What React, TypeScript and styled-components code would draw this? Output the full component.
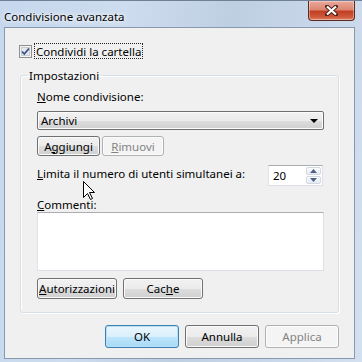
import styled, { createGlobalStyle } from "styled-components";

const GlobalStyle = createGlobalStyle`
  html, body {
    margin: 0;
    padding: 0;
  }
  body {
    width: 362px;
    height: 362px;
    overflow: hidden;
    font-family: "Segoe UI", "Noto Sans", sans-serif;
    font-size: 11.5px;
    line-height: 13px;
    color: #000;
  }
  * {
    box-sizing: border-box;
  }
`;

const Window = styled.div`
  position: relative;
  width: 362px;
  height: 362px;
  display: flex;
  flex-direction: column;
  padding: 0 7px 3px 4px;
  border-top: 1px solid #6f8097;
  background: linear-gradient(
    100deg,
    #c6d8ee 0%,
    #cddcee 30%,
    #bfcfe2 55%,
    #c9d8ea 80%,
    #d3e0ef 100%
  );
`;

const TitleBar = styled.div`
  height: 26px;
  display: flex;
  justify-content: space-between;
  align-items: flex-start;
`;

const Title = styled.div`
  margin-top: 9px;
  font-size: 11.5px;
  color: #000;
  text-shadow: 0 0 6px #fff, 0 0 3px #fff;
`;

const CloseButton = styled.div`
  width: 47px;
  height: 20px;
  display: flex;
  align-items: center;
  justify-content: center;
  border: 1px solid #5b2a22;
  border-top: none;
  border-radius: 0 0 4px 4px;
  background: linear-gradient(
    180deg,
    #e9a99b 0%,
    #dc8672 45%,
    #c23f24 55%,
    #cf5a3b 85%,
    #e0876b 100%
  );
  box-shadow: inset 0 0 0 1px rgba(255, 255, 255, 0.35);
`;

const Client = styled.div`
  flex: 1;
  display: flex;
  flex-direction: column;
  background: #f0f0f0;
  border: 1px solid #8799b0;
`;

const CheckRow = styled.div`
  display: flex;
  align-items: center;
  gap: 3px;
  margin: 16px 0 0 14px;
`;

const FocusLabel = styled.span`
  outline: 1px dotted #222;
  padding: 1px 1px 0;
`;

const Group = styled.fieldset`
  margin: 11px 15px 0;
  padding: 0;
  min-width: 0;
  border: 1px solid #d5dfe5;
  border-radius: 3px;
  box-shadow: inset 1px 1px 0 #fff, 1px 1px 0 #fff;
`;

const Legend = styled.legend`
  margin-left: 6px;
  padding: 0 2px;
  line-height: 13px;
`;

const GroupBody = styled.div`
  display: flex;
  flex-direction: column;
  padding: 8px 14px 13px 16px;
`;

const Label = styled.div<{ $top?: number }>`
  margin-top: ${(p) => p.$top ?? 0}px;
`;

const Combo = styled.div`
  margin-top: 8px;
  height: 19px;
  display: flex;
  align-items: center;
  justify-content: space-between;
  padding: 0 5px 0 3px;
  border: 1px solid #707070;
  border-radius: 2px;
  background: linear-gradient(180deg, #f2f2f2 0%, #ebebeb 50%, #dddddd 51%, #cfcfcf 100%);
  box-shadow: inset 0 0 0 1px #fcfcfc;
`;

const Row = styled.div<{ $top: number; $gap?: number }>`
  display: flex;
  gap: ${(p) => p.$gap ?? 6}px;
  margin-top: ${(p) => p.$top}px;
`;

const SpreadRow = styled.div`
  display: flex;
  justify-content: space-between;
  align-items: flex-start;
  margin-top: 9px;
  padding-right: 1px;
`;

const Button = styled.button<{ $w: number; $h?: number; $primary?: boolean }>`
  width: ${(p) => p.$w}px;
  height: ${(p) => p.$h ?? 20}px;
  padding: 0;
  font: inherit;
  line-height: 13px;
  color: #000;
  border: 1px solid ${(p) => (p.$primary ? "#3c7fb1" : "#707070")};
  border-radius: 3px;
  background: ${(p) =>
    p.$primary
      ? "linear-gradient(180deg, #eaf6fd 0%, #d9f0fc 50%, #bee6fd 51%, #a7d9f5 100%)"
      : "linear-gradient(180deg, #f2f2f2 0%, #ebebeb 50%, #dddddd 51%, #cfcfcf 100%)"};
  box-shadow: inset 0 0 0 1px ${(p) => (p.$primary ? "#b6e1f9" : "#fbfbfb")};

  &:disabled {
    color: #838383;
    border-color: #adb2b5;
    background: #f4f4f4;
    box-shadow: inset 0 0 0 1px #fcfcfc;
  }
`;

const SpinBox = styled.div`
  width: 55px;
  height: 21px;
  display: flex;
  background: #fff;
  border: 1px solid #dbdfe6;
  border-top-color: #abadb3;
  border-left-color: #e2e3ea;
`;

const SpinValue = styled.div`
  flex: 1;
  padding: 3px 0 0 4px;
`;

const SpinButtons = styled.div`
  width: 16px;
  display: flex;
  flex-direction: column;
  gap: 1px;
  padding: 1px 1px 1px 0;
`;

const SpinArrow = styled.div`
  flex: 1;
  display: flex;
  align-items: center;
  justify-content: center;
  border: 1px solid #d2d9e2;
  border-radius: 2px;
  background: linear-gradient(180deg, #fbfcfd, #e6ebf1);
`;

const Comments = styled.div`
  margin-top: 1px;
  height: 59px;
  background: #fff;
  border: 1px solid #dbdfe6;
  border-top-color: #abadb3;
  border-left-color: #e2e3ea;
`;

const Footer = styled.div`
  display: flex;
  justify-content: flex-end;
  gap: 6px;
  margin: 12px 15px 0 0;
`;

const Pointer = styled.svg`
  position: absolute;
  left: 83px;
  top: 180px;
`;

function CheckBox() {
  return (
    <svg width="13" height="13" viewBox="0 0 13 13">
      <rect x="0.5" y="0.5" width="12" height="12" fill="#f4f4f4" stroke="#8e8f8f" />
      <rect x="2.5" y="2.5" width="8" height="8" fill="#e4e7ec" stroke="#c6cbd3" />
      <path d="M3 6.5 L5.3 9 L10 3.5" fill="none" stroke="#3a5387" strokeWidth="1.8" />
    </svg>
  );
}

function Arrow({ up }: { up?: boolean }) {
  return (
    <svg width="7" height="4" viewBox="0 0 7 4">
      <path d={up ? "M0 4 L3.5 0 L7 4 Z" : "M0 0 L3.5 4 L7 0 Z"} fill="#4d6185" />
    </svg>
  );
}

export default function App() {
  return (
    <>
      <GlobalStyle />
      <Window>
        <TitleBar>
          <Title>Condivisione avanzata</Title>
          <CloseButton>
            <svg width="13" height="11" viewBox="0 0 13 11">
              <path
                d="M2 1.5 L11 9.5 M11 1.5 L2 9.5"
                stroke="#4a2019"
                strokeWidth="4"
                strokeLinecap="round"
              />
              <path d="M2 1.5 L11 9.5 M11 1.5 L2 9.5" stroke="#fff" strokeWidth="2.2" />
            </svg>
          </CloseButton>
        </TitleBar>
        <Client>
          <CheckRow>
            <CheckBox />
            <FocusLabel>Condividi la cartella</FocusLabel>
          </CheckRow>
          <Group>
            <Legend>Impostazioni</Legend>
            <GroupBody>
              <Label>
                <u>N</u>ome condivisione:
              </Label>
              <Combo>
                <span>Archivi</span>
                <svg width="8" height="4" viewBox="0 0 8 4">
                  <path d="M0 0 H8 L4 4 Z" fill="#000" />
                </svg>
              </Combo>
              <Row $top={6} $gap={2}>
                <Button $w={63}>
                  A<u>g</u>giungi
                </Button>
                <Button $w={62} disabled>
                  <u>R</u>imuovi
                </Button>
              </Row>
              <SpreadRow>
                <Label $top={2}>
                  <u>L</u>imita il numero di utenti simultanei a:
                </Label>
                <SpinBox>
                  <SpinValue>20</SpinValue>
                  <SpinButtons>
                    <SpinArrow>
                      <Arrow up />
                    </SpinArrow>
                    <SpinArrow>
                      <Arrow />
                    </SpinArrow>
                  </SpinButtons>
                </SpinBox>
              </SpreadRow>
              <Label $top={12}>
                <u>C</u>ommenti:
              </Label>
              <Comments />
              <Row $top={7}>
                <Button $w={80} $h={21}>
                  <u>A</u>utorizzazioni
                </Button>
                <Button $w={80} $h={21}>
                  Cac<u>h</u>e
                </Button>
              </Row>
            </GroupBody>
          </Group>
          <Footer>
            <Button $w={74} $h={23} $primary>
              OK
            </Button>
            <Button $w={74} $h={23}>
              Annulla
            </Button>
            <Button $w={74} $h={23} disabled>
              Applica
            </Button>
          </Footer>
        </Client>
        <Pointer width="13" height="20" viewBox="0 0 13 20">
          <path
            d="M0.5 0.5 V16.5 L4.5 12.5 L7.5 18.5 L9.5 17.5 L6.5 11.5 H11.5 Z"
            fill="#fff"
            stroke="#000"
            strokeLinejoin="miter"
          />
        </Pointer>
      </Window>
    </>
  );
}
